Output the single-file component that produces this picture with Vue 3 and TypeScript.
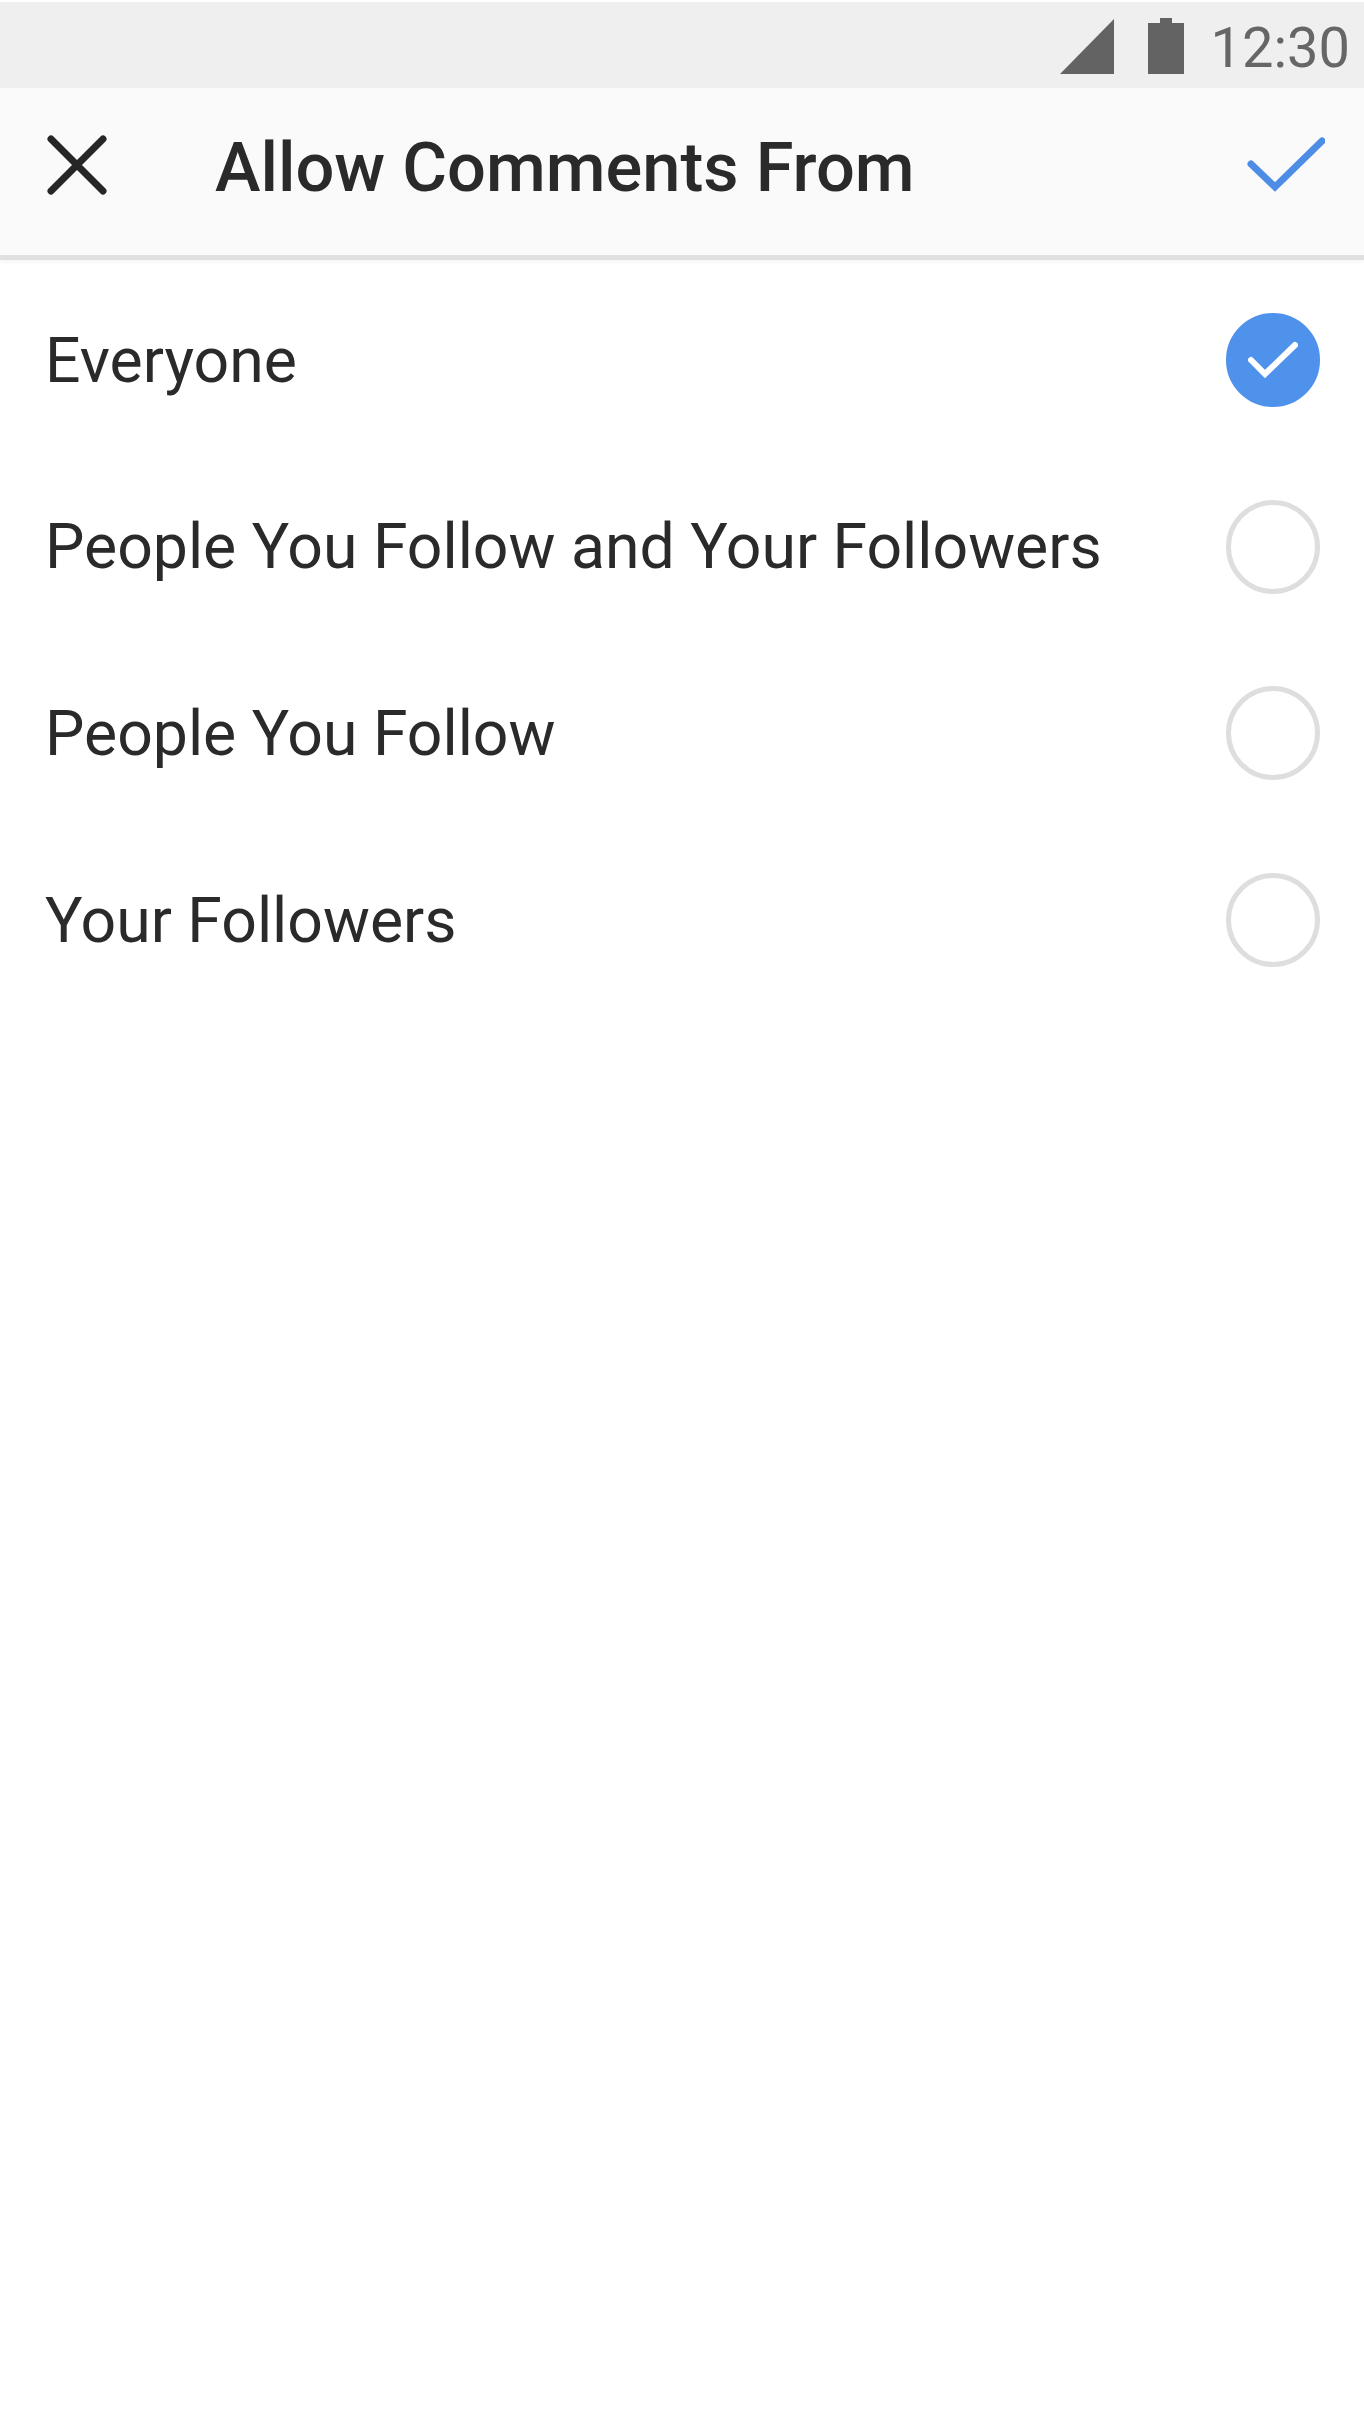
<script setup lang="ts">
const options = [
  { label: 'Everyone', selected: true },
  { label: 'People You Follow and Your Followers', selected: false },
  { label: 'People You Follow', selected: false },
  { label: 'Your Followers', selected: false }
]
</script>
<template>
  <div class="screen">
    <div class="status">
      <svg class="signal" width="54" height="55" viewBox="0 0 54 55">
        <path d="M0 55L54 0V55Z" fill="#636363" />
      </svg>
      <svg class="battery" width="36" height="56" viewBox="0 0 36 56">
        <path d="M0 5H12V0H24V5H36V56H0Z" fill="#636363" />
      </svg>
      <span class="time">12:30</span>
    </div>
    <header class="bar">
      <svg class="close" width="60" height="60" viewBox="0 0 60 60">
        <path d="M4 4L56 56M56 4L4 56" stroke="#262626" stroke-width="7" stroke-linecap="round" fill="none" />
      </svg>
      <h1 class="title">Allow Comments From</h1>
      <svg class="done" width="78" height="57" viewBox="0 0 78 57">
        <path d="M4 28L28 51L75 5" stroke="#4e8de6" stroke-width="7" fill="none" stroke-linecap="round" />
      </svg>
    </header>
    <ul class="list">
      <li v-for="opt in options" :key="opt.label" class="row">
        <span class="label">{{ opt.label }}</span>
        <span class="radio" :class="{ on: opt.selected }">
          <svg v-if="opt.selected" width="50" height="38" viewBox="0 0 50 38">
            <path d="M3 19L17 33L47 4" stroke="#fff" stroke-width="6" fill="none" stroke-linecap="round" />
          </svg>
        </span>
      </li>
    </ul>
  </div>
</template>
<style scoped>
.screen {
  width: 1364px;
  height: 2426px;
  background: #fff;
  font-family: Roboto, "Liberation Sans", sans-serif;
  color: #2a2a2a;
  padding-top: 2px;
  box-sizing: border-box;
  filter: blur(0.7px);
}
.status {
  height: 86px;
  background: #efefef;
  display: flex;
  align-items: center;
  justify-content: flex-end;
  padding-right: 14px;
}
.signal { margin-right: 34px; margin-top: 2px; }
.battery { margin-right: 27px; margin-top: 2px; }
.time {
  font-size: 56px;
  color: #666;
  margin-top: 5px;
}
.bar {
  height: 153px;
  background: #fafafa;
  display: flex;
  align-items: center;
  padding: 0 39px 14px 47px;
  border-bottom: 5px solid #e0e0e0;
  box-shadow: 0 2px 4px rgba(0, 0, 0, 0.05);
  box-sizing: content-box;
}
.title {
  flex: 1;
  margin: 5px 0 0 108px;
  font-size: 68.6px;
  font-weight: 500;
}
.list {
  list-style: none;
  margin: 0;
  padding: 7px 0 0;
}
.row {
  height: 186.6px;
  display: flex;
  align-items: center;
  justify-content: space-between;
  padding: 0 44px 0 45px;
}
.label { font-size: 62.5px; }
.radio {
  width: 94px;
  height: 94px;
  border-radius: 50%;
  border: 5px solid #dedede;
  box-sizing: border-box;
  display: flex;
  align-items: center;
  justify-content: center;
}
.radio.on {
  background: #4f92eb;
  border-color: #4f92eb;
}
</style>
